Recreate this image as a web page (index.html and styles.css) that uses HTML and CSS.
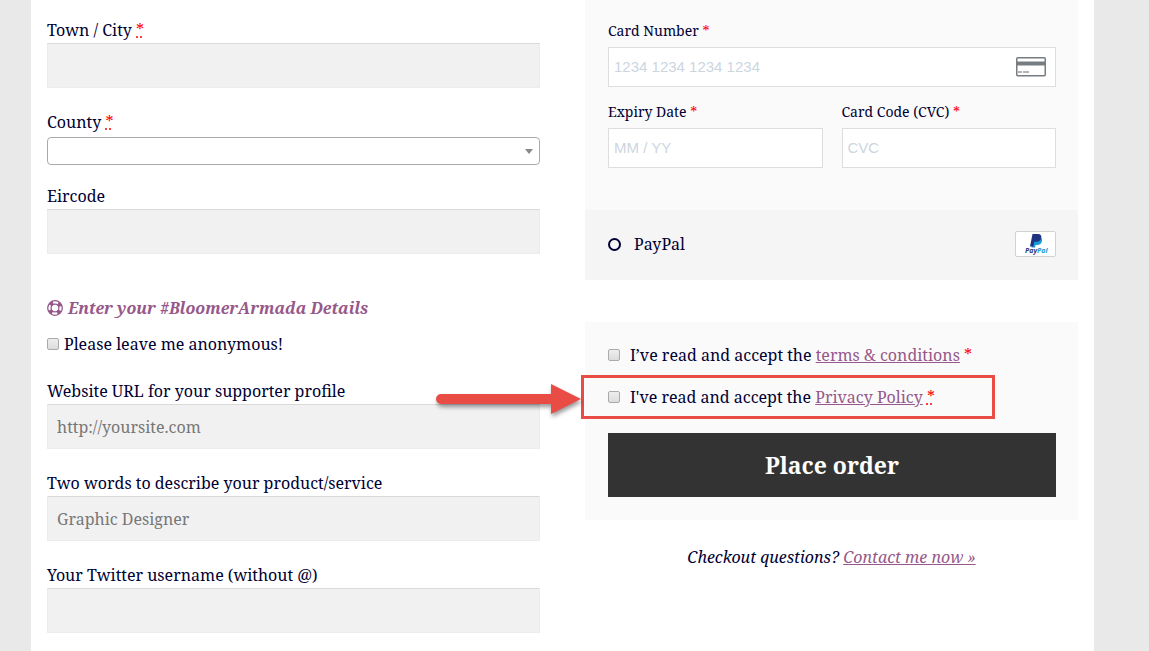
FILE: index.html
```html
<!DOCTYPE html>
<html lang="en">
  <head>
    <meta charset="utf-8">
    <title>Checkout</title>
    <link rel="stylesheet" href="styles.css">
  </head>
  <body>
    <form class="checkout">
      <div class="col billing">
        <div class="form-row">
          <label for="city">Town / City <abbr class="required" title="required">*</abbr></label>
          <input type="text" id="city" class="input-text">
        </div>
        <div class="form-row select-row">
          <label for="county">County <abbr class="required" title="required">*</abbr></label>
          <div class="select-wrap">
            <select id="county"><option></option></select>
          </div>
        </div>
        <div class="form-row">
          <label for="eircode">Eircode</label>
          <input type="text" id="eircode" class="input-text">
        </div>

        <h3 class="details-title">
          <svg class="life-ring" viewBox="0 0 16 16">
            <circle cx="8" cy="8" r="7.3" fill="none" stroke="currentColor" stroke-width="1.3"/>
            <circle cx="8" cy="8" r="3.9" fill="none" stroke="currentColor" stroke-width="1.3"/>
            <circle cx="8" cy="8" r="5.500" fill="none" stroke="currentColor" stroke-width="4" stroke-dasharray="3.600 5.040" stroke-dashoffset="-2.520"/>
          </svg>
          Enter your #BloomerArmada Details
        </h3>
        <div class="form-row check-row">
          <input type="checkbox" id="anonymous">
          <label for="anonymous">Please leave me anonymous!</label>
        </div>
        <div class="form-row">
          <label for="website">Website URL for your supporter profile</label>
          <input type="text" id="website" class="input-text" placeholder="http://yoursite.com">
        </div>
        <div class="form-row">
          <label for="words">Two words to describe your product/service</label>
          <input type="text" id="words" class="input-text" placeholder="Graphic Designer">
        </div>
        <div class="form-row">
          <label for="twitter">Your Twitter username (without @)</label>
          <input type="text" id="twitter" class="input-text">
        </div>
      </div>

      <div class="col payment">
        <div class="card-box">
          <div class="card-field">
            <label for="card-number">Card Number <span class="required">*</span></label>
            <div class="card-number">
              <input type="text" id="card-number" class="card-input" placeholder="1234 1234 1234 1234">
              <svg class="card-icon" viewBox="0 0 30 20">
                <rect x=".75" y=".75" width="28.500" height="18" rx="1" fill="#fff" stroke="#777c80" stroke-width="1.5"/>
                <path d="M1 4.500h28v4H1z" fill="#777c80"/>
                <path d="M2 15h4M7 15h6" stroke="#999da0" stroke-width="1.5"/>
              </svg>
            </div>
          </div>
          <div class="card-split">
            <div class="card-field">
              <label for="expiry">Expiry Date <span class="required">*</span></label>
              <input type="text" id="expiry" class="card-input" placeholder="MM / YY">
            </div>
            <div class="card-field">
              <label for="cvc">Card Code (CVC) <span class="required">*</span></label>
              <input type="text" id="cvc" class="card-input" placeholder="CVC">
            </div>
          </div>
        </div>
        <div class="paypal-row">
          <input type="radio" id="paypal" name="method">
          <label for="paypal">PayPal</label>
          <svg class="paypal-logo" viewBox="0 0 41 26">
            <rect x=".5" y=".5" width="40" height="25" rx="1.5" fill="#fff" stroke="#d2d2d2"/>
            <path d="M19 6h5.500q3 .5 2.500 4-.8 4-5 4h-1.500l-.5 2.500h-3.500z" fill="#179bd7"/>
            <path d="M17.500 3h5.500q4 .3 3.200 4-.8 3.800-5 3.800h-2l-.8 4.700h-3.400z" fill="#1f3480"/>
            <text class="paypal-word" x="10" y="22" fill="#253b80">Pay<tspan fill="#179bd7">Pal</tspan></text>
          </svg>
        </div>

        <div class="order-box">
          <div class="terms-row">
            <input type="checkbox" id="terms">
            <label for="terms">I’ve read and accept the <a href="#">terms &amp; conditions</a> <span class="required">*</span></label>
          </div>
          <div class="terms-row highlighted">
            <input type="checkbox" id="privacy">
            <label for="privacy">I've read and accept the <a href="#">Privacy Policy</a> <abbr class="required" title="required">*</abbr></label>
            <svg class="arrow" viewBox="0 0 150 40">
              <path d="M6 15H116V5L146 20 116 35V25H6A5 5 0 0 1 6 15z" fill="#e94b45"/>
            </svg>
          </div>
          <button type="button" class="place-order">Place order</button>
        </div>
        <p class="questions">Checkout questions? <a href="#">Contact me now »</a></p>
      </div>
    </form>
  </body>
</html>
```
FILE: styles.css
```css
* {
  box-sizing: border-box;
}

body {
  margin: 0;
  background-color: #e9e9e9;
  color: #000033;
  font-family: "Noto Serif", "Droid Serif", "Liberation Serif", serif;
  font-size: 16px;
  line-height: 26px;
}

a {
  color: #96588a;
}

.checkout {
  display: grid;
  grid-template-columns: 1fr 1fr;
  gap: 45px;
  min-height: 100vh;
  margin: 0 55px 0 31px;
  padding: 0 16px;
  background-color: #fff;
}

.billing {
  padding-top: 17px;
}

.form-row {
  margin-bottom: 21px;
}

.select-row {
  margin-bottom: 18px;
}

.form-row label {
  display: block;
}

.required {
  color: #ff0000;
}

abbr.required {
  text-decoration: underline dotted;
}

.input-text {
  display: block;
  width: 100%;
  height: 45px;
  padding: 0 9px;
  border: 1px solid #ececec;
  border-top-color: #d9d9d9;
  background-color: #f1f1f1;
  color: #000033;
  font: inherit;
}

.input-text::placeholder {
  color: #777;
}

.select-wrap {
  position: relative;
  padding-top: 2px;
}

.select-wrap select {
  display: block;
  width: 100%;
  height: 28px;
  border: 1px solid #aaa;
  border-radius: 4px;
  background-color: #fff;
  appearance: none;
}

.select-wrap::after {
  content: "";
  position: absolute;
  top: 14px;
  right: 7px;
  border: 4px solid transparent;
  border-top: 5px solid #888;
  border-bottom: 0;
}

.details-title {
  display: flex;
  align-items: center;
  gap: 5px;
  margin: 41px 0 10px;
  color: #96588a;
  font-size: 16px;
  font-style: italic;
}

.life-ring {
  width: 16px;
  height: 16px;
}

.check-row {
  display: flex;
  align-items: center;
  gap: 5px;
}

input[type="checkbox"] {
  width: 12px;
  height: 12px;
  margin: 0;
  border: 1px solid #aaa;
  border-radius: 2px;
  background-image: linear-gradient(#eee, #dcdcdc);
  appearance: none;
}

.card-box {
  padding: 19px 22px 42px 23px;
  background-color: #fafafa;
}

.card-field label {
  display: block;
  margin-bottom: 4px;
  font-size: 14px;
  line-height: 24px;
}

.card-number {
  position: relative;
}

.card-input {
  display: block;
  width: 100%;
  height: 40px;
  padding: 0 5px 2px;
  border: 1px solid #ddd;
  background-color: #fff;
  font-family: "Liberation Sans", Arial, sans-serif;
  font-size: 15px;
}

.card-input::placeholder {
  color: #ccd6df;
}

.card-icon {
  position: absolute;
  top: 10px;
  right: 10px;
  width: 30px;
  height: 20px;
}

.card-split {
  display: grid;
  grid-template-columns: 1fr 1fr;
  gap: 19px;
  margin-top: 13px;
}

.paypal-row {
  display: flex;
  align-items: center;
  height: 70px;
  padding: 0 22px 2px 23px;
  background-color: #f5f5f5;
}

.paypal-row input {
  width: 13px;
  height: 13px;
  margin: 0 13px 0 0;
  border: 2px solid #000033;
  border-radius: 50%;
  appearance: none;
}

.paypal-logo {
  width: 41px;
  height: 26px;
  margin-left: auto;
}

.paypal-word {
  font: italic bold 7px "Open Sans", sans-serif;
}

.order-box {
  margin-top: 42px;
  padding: 13px 22px 23px 23px;
  background-color: #fafafa;
}

.terms-row {
  display: flex;
  align-items: center;
  gap: 10px;
  height: 40px;
}

.highlighted {
  position: relative;
  height: 44px;
}

/* red frame around the privacy checkbox */
.highlighted::before {
  content: "";
  position: absolute;
  top: 0;
  bottom: 0;
  left: -27px;
  right: 61px;
  border: 3px solid #e94b45;
  pointer-events: none;
}

.arrow {
  position: absolute;
  top: 4px;
  left: -173px;
  width: 150px;
  height: 40px;
  filter: drop-shadow(1px 3px 2px rgba(0, 0, 0, 0.4));
}

.place-order {
  display: block;
  width: 100%;
  height: 64px;
  margin-top: 14px;
  border: 0;
  background-color: #333;
  color: #fff;
  font: inherit;
  font-size: 23px;
  font-weight: bold;
}

.questions {
  margin: 24px 0 0;
  font-style: italic;
  text-align: center;
}
```
